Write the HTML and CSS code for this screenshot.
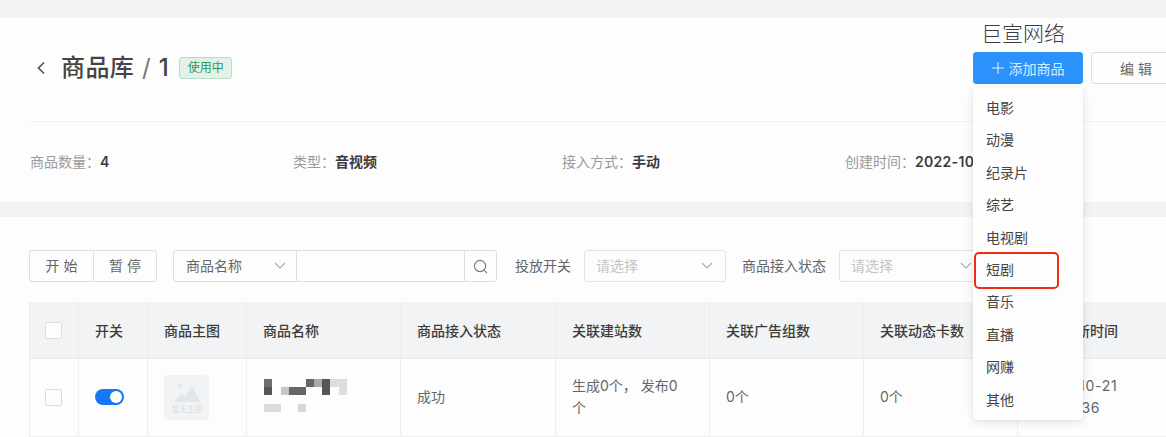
FILE: index.html
```html
<!DOCTYPE html>
<html lang="zh">
<head>
<meta charset="utf-8">
<title>商品库</title>
<link rel="stylesheet" href="styles.css">
</head>
<body>
<div class="page">
  <div class="band band-top"></div>
  <header class="head">
    <div class="title-row">
      <svg class="back" width="10" height="14" viewBox="0 0 10 14"><path d="M8 1.500 2.500 7 8 12.500" fill="none" stroke="#555" stroke-width="1.700"/></svg>
      <h1 class="title">商品库 <span class="slash">/</span> 1</h1>
      <span class="tag">使用中</span>
      <div class="actions">
        <button class="btn btn-primary"><svg class="plus" width="12" height="12" viewBox="0 0 12 12"><path d="M6 0v12M0 6h12" stroke="#dcecff" stroke-width="1.100" fill="none"/></svg>添加商品</button>
        <button class="btn btn-edit">编 辑</button>
      </div>
    </div>
    <div class="stats">
      <div class="stat"><span class="k">商品数量：</span><b>4</b></div>
      <div class="stat"><span class="k">类型：</span><b>音视频</b></div>
      <div class="stat"><span class="k">接入方式：</span><b>手动</b></div>
      <div class="stat"><span class="k">创建时间：</span><b class="date">2022-10-21</b></div>
    </div>
  </header>
  <div class="band band-mid"></div>
  <section class="content">
    <div class="toolbar">
      <div class="group">
        <button class="seg seg-first">开 始</button>
        <button class="seg">暂 停</button>
      </div>
      <div class="search">
        <div class="search-type"><span>商品名称</span><svg class="chev" width="12" height="7" viewBox="0 0 12 7"><path d="M1 1l5 5 5-5" fill="none" stroke="#aaa" stroke-width="1.100"/></svg></div>
        <div class="search-input"></div>
        <div class="search-btn"><svg width="15" height="15" viewBox="0 0 16 16"><circle cx="7.500" cy="7.500" r="6" fill="none" stroke="#777" stroke-width="1.200"/><path d="M11.800 11.800 15 15" stroke="#777" stroke-width="1.200"/></svg></div>
      </div>
      <label class="lbl lbl-a">投放开关</label>
      <div class="select sel-a"><span>请选择</span><svg class="chev" width="12" height="7" viewBox="0 0 12 7"><path d="M1 1l5 5 5-5" fill="none" stroke="#aaa" stroke-width="1.100"/></svg></div>
      <label class="lbl lbl-b">商品接入状态</label>
      <div class="select sel-b"><span>请选择</span><svg class="chev" width="12" height="7" viewBox="0 0 12 7"><path d="M1 1l5 5 5-5" fill="none" stroke="#aaa" stroke-width="1.100"/></svg></div>
    </div>
    <table class="table">
      <colgroup>
        <col class="c1"><col class="c2"><col class="c3"><col class="c4"><col class="c5"><col class="c6"><col class="c7"><col class="c8"><col class="c9">
      </colgroup>
      <thead>
        <tr>
          <th class="center"><span class="check"></span></th>
          <th>开关</th>
          <th>商品主图</th>
          <th>商品名称</th>
          <th>商品接入状态</th>
          <th>关联建站数</th>
          <th>关联广告组数</th>
          <th>关联动态卡数</th>
          <th>最后更新时间</th>
        </tr>
      </thead>
      <tbody>
        <tr>
          <td class="center"><span class="check"></span></td>
          <td><span class="switch"><span class="knob"></span></span></td>
          <td>
            <div class="thumb">
              <svg width="30" height="25" viewBox="0 0 30 25"><circle cx="7" cy="5" r="2.500" fill="#e2e6ea"/><path d="M0 24 9 13l4 4 8-11 9 18z" fill="#e2e6ea"/></svg>
              <span class="thumb-text">暂无主图</span>
            </div>
          </td>
          <td>
            <svg class="mosaic" width="84" height="36" viewBox="0 0 84 36">
              <rect x="0" y="0" width="8" height="8" fill="#6d6d6d"/><rect x="0" y="8" width="8" height="8" fill="#555"/>
              <rect x="17" y="8" width="8" height="8" fill="#c6c6c6"/><rect x="25" y="8" width="17" height="8" fill="#666"/>
              <rect x="42" y="0" width="8" height="8" fill="#666"/><rect x="50" y="0" width="8" height="8" fill="#aaa"/>
              <rect x="58" y="0" width="8" height="8" fill="#555"/><rect x="58" y="8" width="8" height="8" fill="#555"/>
              <rect x="66" y="0" width="17" height="8" fill="#ddd"/><rect x="75" y="8" width="8" height="8" fill="#ddd"/>
              <rect x="0" y="25" width="17" height="8" fill="#dcdcdc"/><rect x="34" y="25" width="8" height="8" fill="#d8d8d8"/>
            </svg>
          </td>
          <td>成功</td>
          <td class="narrow">生成0个， 发布0个</td>
          <td>0个</td>
          <td>0个</td>
          <td class="time">2022-10-21 20:23:36</td>
        </tr>
      </tbody>
    </table>
  </section>

  <div class="brand">巨宣网络</div>
  <ul class="menu">
    <li>电影</li>
    <li>动漫</li>
    <li>纪录片</li>
    <li>综艺</li>
    <li>电视剧</li>
    <li class="marked">短剧</li>
    <li>音乐</li>
    <li>直播</li>
    <li>网赚</li>
    <li>其他</li>
  </ul>
</div>
</body>
</html>
```
FILE: styles.css
```css
* { box-sizing: border-box; }
html, body { margin: 0; padding: 0; }
body {
  width: 1166px;
  height: 437px;
  overflow: hidden;
  background: #fdfdfd;
  color: #4a4a4a;
  font-family: Inter, "Noto Sans CJK SC", sans-serif;
  font-size: 14px;
}
.page { position: relative; width: 1166px; height: 437px; overflow: hidden; }
.band { background: #f2f3f5; }
.band-top { height: 18px; }
.band-mid { height: 15px; }

.head { height: 184px; padding-left: 30px; }
.title-row {
  display: flex;
  align-items: center;
  height: 104px;
  padding-bottom: 4px;
  border-bottom: 1px solid #f0f0f0;
}
.back { margin: 0 15px 0 6px; flex: none; }
.title { margin: 0; font-size: 24px; font-weight: 500; color: #444; line-height: 32px; letter-spacing: 0.4px; white-space: pre; }
.slash { font-weight: 400; color: #777; margin: 0 1px; }
.tag {
  margin-left: 10px;
  width: 53px;
  height: 22px;
  line-height: 20px;
  text-align: center;
  font-size: 12px;
  color: #2c9a57;
  background: #e3f1e8;
  border: 1px solid #b5e0c4;
  border-radius: 3px;
}
.actions { margin-left: auto; display: flex; gap: 8px; flex: none; width: 193px; }
.btn {
  height: 32px;
  padding: 0;
  font: inherit;
  font-size: 14px;
  border-radius: 3px;
  flex: none;
}
.btn-primary {
  display: flex;
  align-items: center;
  justify-content: center;
  gap: 5px;
  width: 110px;
  color: #dcecff;
  background: #2b92fb;
  border: 1px solid #2b92fb;
}
.plus { flex: none; }
.btn-edit {
  width: 90px;
  color: #666;
  background: #fdfdfd;
  border: 1px solid #dedede;
}
.stats {
  display: grid;
  grid-template-columns: 263px 269px 283px 1fr;
  height: 80px;
  padding-top: 29px;
  line-height: 22px;
  font-size: 14px;
}
.stat { white-space: nowrap; }
.k { color: #9a9a9a; }
.stat b { color: #3a3a3a; font-weight: 600; }
.date { letter-spacing: 0.3px; }

.content { padding: 33px 0 0 29px; }
.toolbar { display: flex; align-items: center; height: 32px; }
.group { display: flex; flex: none; }
.seg {
  width: 64px;
  height: 32px;
  padding: 0 0 2px;
  font: inherit;
  color: #666;
  background: #fdfdfd;
  border: 1px solid #dedede;
  border-radius: 0 3px 3px 0;
}
.seg-first { border-right: 0; border-radius: 3px 0 0 3px; }
.search {
  display: flex;
  height: 32px;
  width: 324px;
  margin-left: 16px;
  border: 1px solid #dedede;
  border-radius: 3px;
  flex: none;
}
.search-type {
  width: 123px;
  padding: 0 10px 2px 12px;
  display: flex;
  align-items: center;
  justify-content: space-between;
  color: #666;
  border-right: 1px solid #dedede;
}
.search-input { flex: 1; }
.search-btn {
  width: 32px;
  display: flex;
  align-items: center;
  justify-content: center;
  border-left: 1px solid #dedede;
}
.lbl { color: #666; flex: none; padding-bottom: 2px; }
.lbl-a { margin-left: 18px; }
.lbl-b { margin-left: 16px; }
.select {
  height: 32px;
  display: flex;
  align-items: center;
  justify-content: space-between;
  padding: 0 12px 2px 11px;
  color: #c4c4c4;
  border: 1px solid #e2e2e2;
  border-radius: 3px;
  flex: none;
}
.sel-a { width: 142px; margin-left: 13px; }
.sel-b { width: 146px; margin-left: 13px; }

.table {
  margin-top: 20px;
  width: 1137px;
  table-layout: fixed;
  border-collapse: collapse;
  border-left: 1px solid #f0f0f0;
}
.c1 { width: 49px; }
.c2 { width: 69px; }
.c3 { width: 99px; }
.c4 { width: 154px; }
.c5 { width: 155px; }
.c6 { width: 154px; }
.c7 { width: 154px; }
.c8 { width: 154px; }
.c9 { width: 149px; }
.table th {
  height: 56px;
  padding: 0 16px;
  background: #f2f3f5;
  font-weight: 500;
  font-size: 14px;
  color: #3c3c3c;
  text-align: left;
  border-left: 1px solid #ececec;
  border-bottom: 1px solid #ececec;
}
.table td {
  height: 78px;
  padding: 0 16px;
  color: #666;
  line-height: 22px;
  border-left: 1px solid #efefef;
  border-bottom: 1px solid #efefef;
}
.table .center { padding: 0 2px 0 0; text-align: center; }
.table .narrow { padding-right: 24px; }
.table .time { letter-spacing: 0.8px; }
.check {
  display: inline-block;
  width: 17px;
  height: 17px;
  margin-top: -2px;
  vertical-align: middle;
  background: #fdfdfd;
  border: 1px solid #dcdcdc;
  border-radius: 2px;
}
.switch {
  display: block;
  position: relative;
  width: 29px;
  height: 16px;
  background: #1677f5;
  border-radius: 8px;
}
.knob {
  position: absolute;
  top: 2px;
  right: 2px;
  width: 12px;
  height: 12px;
  background: #fff;
  border-radius: 50%;
}
.thumb {
  width: 45px;
  height: 45px;
  display: flex;
  flex-direction: column;
  align-items: center;
  padding-top: 6px;
  background: #f2f3f5;
  border-radius: 3px;
}
.thumb svg { flex: none; width: 30px; height: 22px; }
.thumb-text { font-size: 8px; line-height: 12px; color: #dadde1; white-space: nowrap; transform: scale(0.95); }
.mosaic { display: block; margin-left: 1px; }

.brand {
  position: absolute;
  top: 20px;
  left: 981px;
  font-size: 21px;
  line-height: 28px;
  font-weight: 300;
  color: #3d3d3d;
  white-space: nowrap;
}
.menu {
  position: absolute;
  top: 88px;
  left: 973px;
  width: 110px;
  height: 332px;
  margin: 0;
  padding: 4px 0;
  list-style: none;
  background: #fdfdfd;
  border-radius: 4px;
  box-shadow: 0 2px 8px rgba(0, 0, 0, 0.12);
}
.menu li {
  position: relative;
  height: 32.4px;
  line-height: 32.4px;
  padding-left: 13px;
  color: #444;
  font-size: 14px;
}
.marked::after {
  content: "";
  box-sizing: border-box;
  position: absolute;
  left: 1px;
  top: -2px;
  width: 85px;
  height: 37px;
  border: 2px solid #ef2b10;
  border-radius: 5px;
}
```
